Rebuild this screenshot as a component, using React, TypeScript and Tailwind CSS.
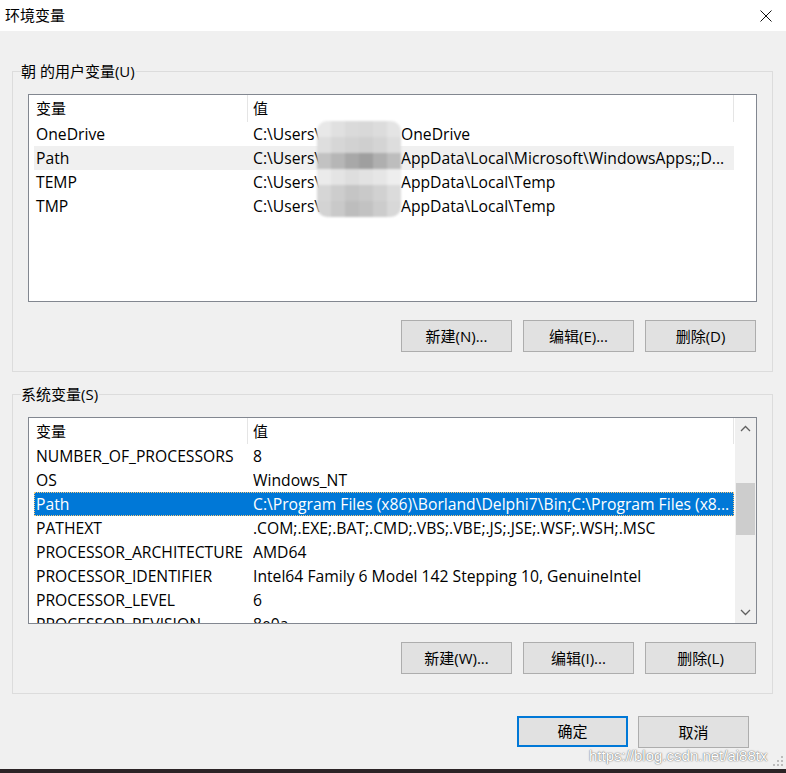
import React from "react";

type Row = { name: string; value: React.ReactNode; selected?: boolean; hover?: boolean };

const masked = (rest: string) => (
  <>
    <span className="inline-block w-[148px]">C:\Users\</span>
    <span>{rest}</span>
  </>
);

const userRows: Row[] = [
  { name: "OneDrive", value: masked("OneDrive") },
  { name: "Path", value: masked("AppData\\Local\\Microsoft\\WindowsApps;;D..."), hover: true },
  { name: "TEMP", value: masked("AppData\\Local\\Temp") },
  { name: "TMP", value: masked("AppData\\Local\\Temp") },
];

const sysRows: Row[] = [
  { name: "NUMBER_OF_PROCESSORS", value: "8" },
  { name: "OS", value: "Windows_NT" },
  { name: "Path", value: "C:\\Program Files (x86)\\Borland\\Delphi7\\Bin;C:\\Program Files (x8...", selected: true },
  { name: "PATHEXT", value: ".COM;.EXE;.BAT;.CMD;.VBS;.VBE;.JS;.JSE;.WSF;.WSH;.MSC" },
  { name: "PROCESSOR_ARCHITECTURE", value: "AMD64" },
  { name: "PROCESSOR_IDENTIFIER", value: "Intel64 Family 6 Model 142 Stepping 10, GenuineIntel" },
  { name: "PROCESSOR_LEVEL", value: "6" },
  { name: "PROCESSOR_REVISION", value: "8e0a" },
];

// pixelated blur over the user name
const mosaic = [
  ["#e8e8e8", "#e0e0e0", "#dadada", "#d8d8d8", "#dcdcdc", "#e4e4e4"],
  ["#dedede", "#d6d6d6", "#d2d2d2", "#cfcfcf", "#d4d4d4", "#dddddd"],
  ["#c2c2c2", "#b6b6b6", "#a8a8a8", "#9f9f9f", "#afafaf", "#bdbdbd"],
  ["#ebebeb", "#e4e4e4", "#dedede", "#e2e2e2", "#e6e6e6", "#eeeeee"],
  ["#d6d6d6", "#cdcdcd", "#c5c5c5", "#c9c9c9", "#d1d1d1", "#dbdbdb"],
  ["#d3d3d3", "#c9c9c9", "#bdbdbd", "#c2c2c2", "#cccccc", "#d8d8d8"],
];

function Button({ label, primary }: { label: string; primary?: boolean }) {
  return (
    <button
      className={
        "w-[111px] bg-[#e1e1e1] text-[15px] text-black flex items-center justify-center " +
        (primary ? "h-[31px] border-2 border-[#0078d7]" : "h-[32px] border border-[#adadad]")
      }
    >
      {label}
    </button>
  );
}

function Header({ h }: { h: string }) {
  return (
    <div className={"flex items-center shrink-0 " + h}>
      <span className="w-[218px] pl-[7px]">变量</span>
      <div className="w-px h-full bg-[#e5e5e5]" />
      <span className="w-[485px] pl-[5px]">值</span>
      <div className="w-px h-full bg-[#e5e5e5]" />
    </div>
  );
}

function Rows({ rows }: { rows: Row[] }) {
  return (
    <div className="flex flex-col text-[15.7px]">
      {rows.map((r) => (
        <div
          key={r.name}
          className={
            "ml-[5px] w-[700px] h-[24px] pt-[2px] shrink-0 flex items-center whitespace-nowrap " +
            (r.selected
              ? "bg-[#0078d7] text-white outline outline-1 outline-dotted outline-[#f7c97a] -outline-offset-1"
              : r.hover
              ? "bg-[#f0f0f0]"
              : "")
          }
        >
          <span className="w-[219px] pl-[2px]">{r.name}</span>
          <span className="flex-1 overflow-hidden">{r.value}</span>
        </div>
      ))}
    </div>
  );
}

function Chevron({ up }: { up?: boolean }) {
  return (
    <svg width="11" height="7" viewBox="0 0 11 7">
      <path d={up ? "M1 6 L5.5 1.5 L10 6" : "M1 1 L5.5 5.5 L10 1"} fill="none" stroke="#606060" strokeWidth="1.3" />
    </svg>
  );
}

function Group({ label, children }: { label: string; children: React.ReactNode }) {
  return (
    <div className="relative border border-[#dcdcdc] px-[15px] pt-[22px] pb-[19px]">
      <span className="absolute left-[8px] -top-[11px] bg-[#f0f0f0] pr-[1px] leading-[20px]">{label}</span>
      {children}
    </div>
  );
}

export default function App() {
  return (
    <div className="relative w-[786px] h-[773px] bg-[#f0f0f0] overflow-hidden flex flex-col text-[15px] text-black font-['Open_Sans','Noto_Sans_CJK_SC',sans-serif]">
      {/* Title bar */}
      <div className="h-[31px] bg-white flex items-center justify-between pl-[5px] pr-[14px] shrink-0">
        <span className="font-['Noto_Sans_CJK_SC',sans-serif]">环境变量</span>
        <svg width="12" height="12" viewBox="0 0 12 12">
          <path d="M0.5 0.5 L11.5 11.5 M11.5 0.5 L0.5 11.5" stroke="#111" strokeWidth="1" />
        </svg>
      </div>

      <div className="flex-1 flex flex-col pl-[12px] pr-[13px]">
        <div className="mt-[40px]">
          <Group label="朝 的用户变量(U)">
            <div className="relative h-[208px] border border-[#828790] bg-white overflow-hidden">
              <Header h="h-[27px]" />
              <Rows rows={userRows} />
              <div className="absolute left-[288px] top-[26px] grid grid-cols-6 blur-[1px] rounded-[10px] overflow-hidden">
                {mosaic.flat().map((c, i) => (
                  <div key={i} className="w-[14px] h-[16px]" style={{ background: c }} />
                ))}
              </div>
            </div>
            <div className="flex justify-end gap-[11px] mt-[18px] pr-[1px]">
              <Button label="新建(N)..." />
              <Button label="编辑(E)..." />
              <Button label="删除(D)" />
            </div>
          </Group>
        </div>

        <div className="mt-[22px]">
          <Group label="系统变量(S)">
            <div className="flex h-[207px] border border-[#828790] bg-white overflow-hidden">
              <div className="flex-1 flex flex-col overflow-hidden">
                <Header h="h-[26px]" />
                <Rows rows={sysRows} />
              </div>
              <div className="w-[21px] bg-[#f0f0f0] flex flex-col items-center shrink-0">
                <div className="h-[20px] flex items-center justify-center">
                  <Chevron up />
                </div>
                <div className="mt-[45px] w-[19px] h-[52px] bg-[#cdcdcd]" />
                <div className="flex-1" />
                <div className="h-[22px] flex items-center justify-center">
                  <Chevron />
                </div>
              </div>
            </div>
            <div className="flex justify-end gap-[11px] mt-[18px] pr-[1px]">
              <Button label="新建(W)..." />
              <Button label="编辑(I)..." />
              <Button label="删除(L)" />
            </div>
          </Group>
        </div>

        <div className="flex justify-end gap-[10px] mt-[22px] pr-[24px]">
          <Button label="确定" primary />
          <Button label="取消" />
        </div>
      </div>

      <div className="h-[4px] bg-[#2b2426] shrink-0" />

      {/* watermark */}
      <span className="absolute left-[589px] top-[745px] text-[15px] text-white font-['Liberation_Sans',sans-serif] [text-shadow:0_0_1px_rgba(0,0,0,0.6),0_0_2px_rgba(0,0,0,0.35)]">
        https://blog.csdn.net/ai88tx
      </span>
      {/* resize grip */}
      <svg className="absolute right-[2px] bottom-[6px]" width="12" height="12" viewBox="0 0 12 12">
        {[[9, 1], [5, 5], [9, 5], [1, 9], [5, 9], [9, 9]].map(([x, y], i) => (
          <rect key={i} x={x} y={y} width="2" height="2" fill="#bcbcbc" />
        ))}
      </svg>
    </div>
  );
}
